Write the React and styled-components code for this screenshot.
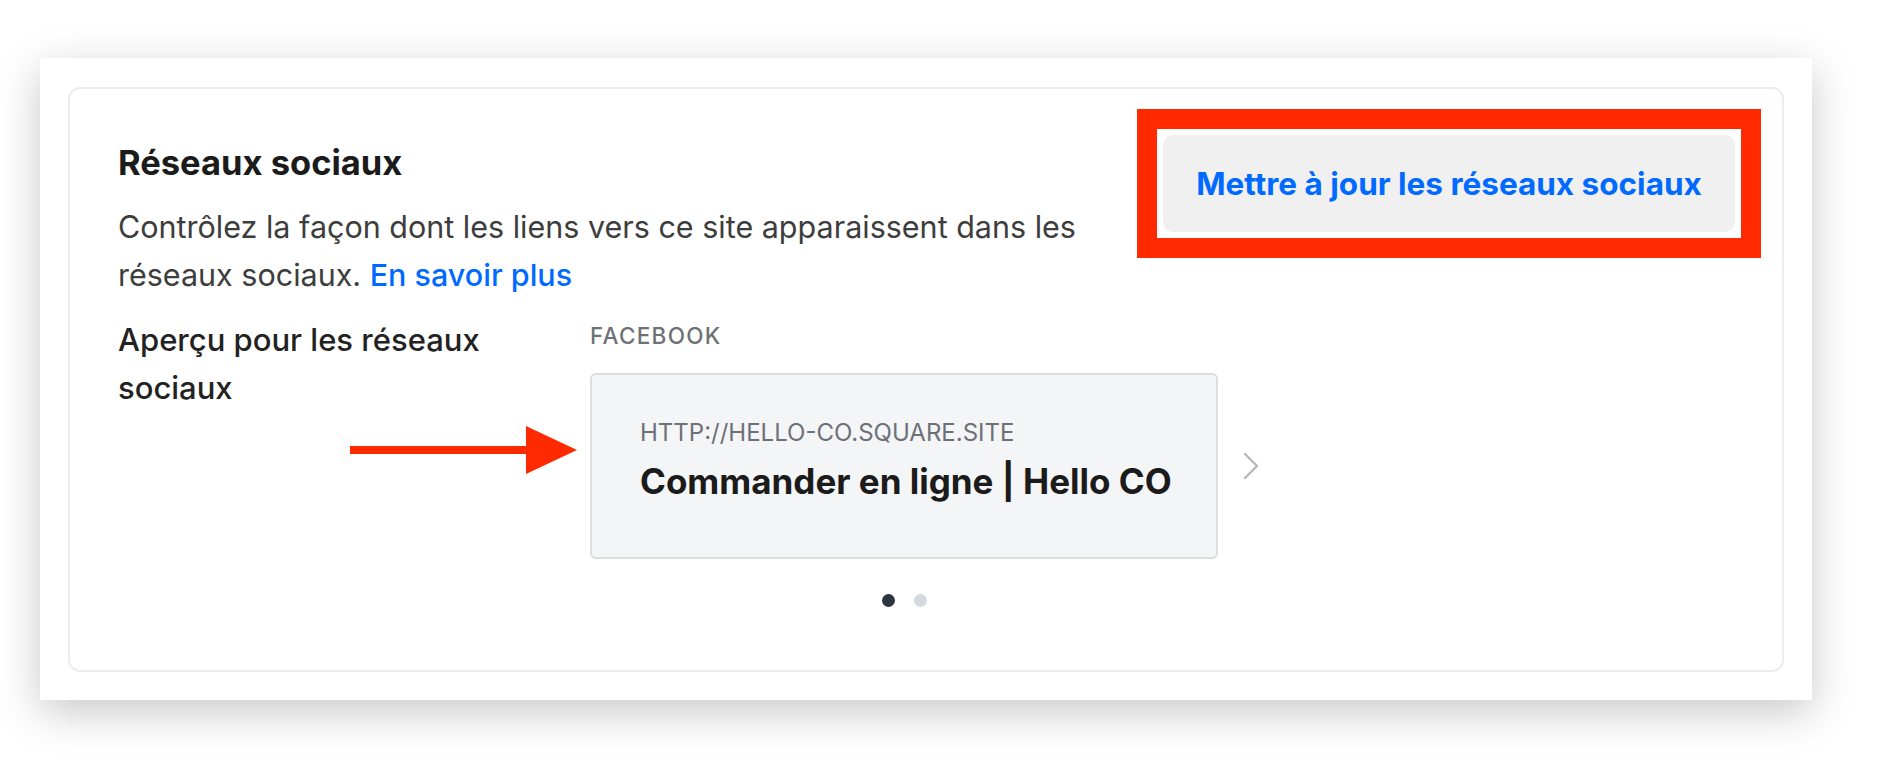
import React from "react";
import styled, { createGlobalStyle } from "styled-components";

const GlobalStyle = createGlobalStyle`
  html, body {
    margin: 0;
    padding: 0;
    background: #ffffff;
  }
  body {
    font-family: Inter, Roboto, "Liberation Sans", Arial, sans-serif;
    -webkit-font-smoothing: antialiased;
  }
  * { box-sizing: border-box; }
`;

const Page = styled.div`
  padding: 58px 80px 60px 40px;
`;

const Panel = styled.section`
  width: 1772px;
  background: #ffffff;
  padding: 29px 28px 28px 28px;
  box-shadow: 0 12px 40px rgba(0, 0, 0, 0.22);
`;

const Card = styled.div`
  position: relative;
  border: 2px solid #ececec;
  border-radius: 12px;
  padding: 46px 47px 46px 48px;
`;

const Header = styled.div`
  display: flex;
  justify-content: space-between;
  align-items: flex-start;
`;

const Intro = styled.div`
  max-width: 1010px;
`;

const Title = styled.h2`
  margin: 0;
  font-size: 34.5px;
  line-height: 56px;
  font-weight: 700;
  color: #1b1b1b;
`;

const Description = styled.p`
  margin: 12px 0 0;
  font-size: 30.5px;
  line-height: 48px;
  font-weight: 400;
  color: #3d3d3d;
`;

const Link = styled.a`
  color: #006aff;
  font-weight: 500;
  text-decoration: none;
`;

const ButtonWrap = styled.div`
  position: relative;
`;

const Button = styled.button`
  display: flex;
  align-items: center;
  justify-content: center;
  width: 572px;
  height: 97px;
  border: none;
  border-radius: 10px;
  background: #f0f0f0;
  color: #006aff;
  font-family: inherit;
  font-size: 31.5px;
  font-weight: 700;
  cursor: pointer;
`;

const Highlight = styled.div`
  position: absolute;
  inset: -26px;
  border: 20px solid #ff2a00;
  pointer-events: none;
`;

const PreviewRow = styled.div`
  position: relative;
  display: grid;
  grid-template-columns: 472px auto;
  margin-top: 17px;
`;

const Label = styled.div`
  max-width: 420px;
  font-size: 31px;
  line-height: 48px;
  font-weight: 500;
  color: #222222;
`;

const PreviewColumn = styled.div`
  display: flex;
  flex-direction: column;
  align-items: flex-start;
`;

const Network = styled.div`
  font-size: 22.5px;
  line-height: 40px;
  font-weight: 500;
  letter-spacing: 1.3px;
  color: #6e7175;
`;

const Carousel = styled.div`
  display: flex;
  align-items: center;
  gap: 24px;
  margin-top: 17px;
`;

const PreviewCard = styled.div`
  width: 628px;
  height: 186px;
  background: #f4f5f7;
  border: 2px solid #dcdde0;
  border-radius: 6px;
  padding: 42px 30px 0 48px;
`;

const Url = styled.div`
  font-size: 24px;
  line-height: 32px;
  font-weight: 400;
  color: #6d7076;
`;

const PreviewTitle = styled.div`
  margin-top: 10px;
  font-size: 35px;
  line-height: 44px;
  font-weight: 700;
  color: #1b1b1b;
  white-space: nowrap;
`;

const Chevron = styled.svg`
  width: 18px;
  height: 30px;
  flex: none;
`;

const Dots = styled.div`
  display: flex;
  gap: 19px;
  width: 628px;
  justify-content: center;
  margin-top: 35px;
  margin-bottom: 17px;
`;

const Dot = styled.span`
  width: 13px;
  height: 13px;
  border-radius: 50%;
  background: ${(p) => (p.$active ? "#2d3541" : "#d6d9dd")};
`;

const Arrow = styled.svg`
  position: absolute;
  left: 232px;
  top: 108px;
  width: 228px;
  height: 52px;
`;

export default function App() {
  return (
    <>
      <GlobalStyle />
      <Page>
        <Panel>
          <Card>
            <Header>
              <Intro>
                <Title>Réseaux sociaux</Title>
                <Description>
                  Contrôlez la façon dont les liens vers ce site apparaissent dans les réseaux sociaux.{" "}
                  <Link href="#">En savoir plus</Link>
                </Description>
              </Intro>
              <ButtonWrap>
                <Button>Mettre à jour les réseaux sociaux</Button>
                <Highlight />
              </ButtonWrap>
            </Header>
            <PreviewRow>
              <Label>Aperçu pour les réseaux sociaux</Label>
              <PreviewColumn>
                <Network>FACEBOOK</Network>
                <Carousel>
                  <PreviewCard>
                    <Url>HTTP://HELLO-CO.SQUARE.SITE</Url>
                    <PreviewTitle>Commander en ligne | Hello CO</PreviewTitle>
                  </PreviewCard>
                  <Chevron viewBox="0 0 18 30" fill="none">
                    <polyline points="3,3 15,15 3,27" stroke="#b4b8bd" strokeWidth="2.4" strokeLinecap="round" strokeLinejoin="round" />
                  </Chevron>
                </Carousel>
                <Dots>
                  <Dot $active />
                  <Dot />
                </Dots>
              </PreviewColumn>
              <Arrow viewBox="0 0 228 52">
                <rect x="0" y="22" width="178" height="8" fill="#ff2a00" />
                <polygon points="176,2 227,26 176,50" fill="#ff2a00" />
              </Arrow>
            </PreviewRow>
          </Card>
        </Panel>
      </Page>
    </>
  );
}
